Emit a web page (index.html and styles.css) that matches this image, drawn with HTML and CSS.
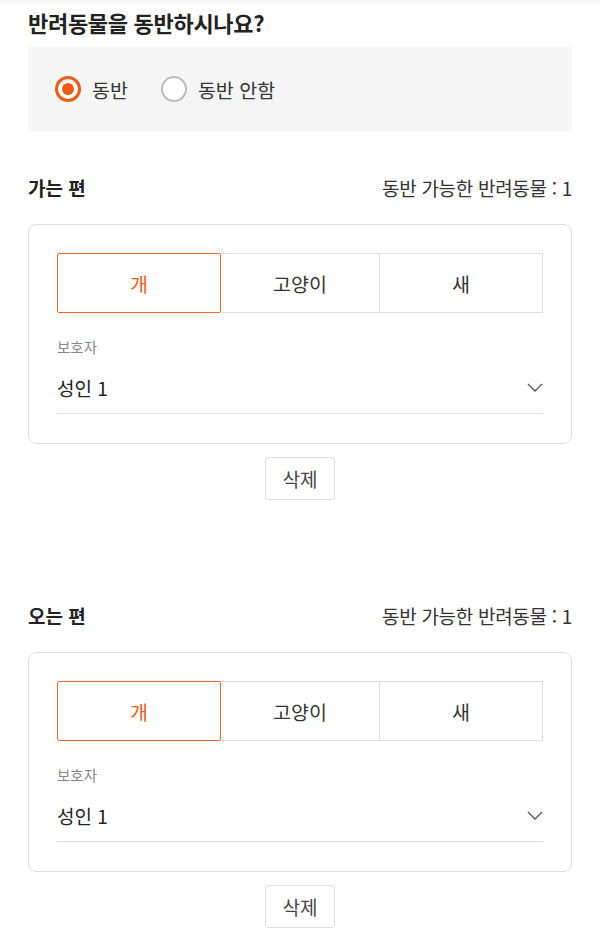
FILE: index.html
```html
<!DOCTYPE html>
<html lang="ko">
<head>
<meta charset="utf-8">
<link rel="stylesheet" href="styles.css">
</head>
<body>
<div class="page">
  <h1 class="q-title">반려동물을 동반하시나요?</h1>
  <div class="radio-box">
    <label class="radio checked"><span class="dot"></span><span>동반</span></label>
    <label class="radio"><span class="dot"></span><span>동반 안함</span></label>
  </div>

  <section class="trip first">
    <div class="trip-head">
      <h2>가는 편</h2>
      <span class="count">동반 가능한 반려동물 : 1</span>
    </div>
    <div class="card">
      <div class="tabs">
        <div class="tab active">개</div>
        <div class="tab">고양이</div>
        <div class="tab">새</div>
      </div>
      <div class="field-label">보호자</div>
      <div class="select">
        <span>성인 1</span>
        <svg class="chev" width="16" height="9" viewBox="0 0 16 9"><path d="M1 1l7 7 7-7" fill="none" stroke="#555" stroke-width="1.3"/></svg>
      </div>
    </div>
    <div class="del-wrap"><button class="del">삭제</button></div>
  </section>

  <section class="trip second">
    <div class="trip-head">
      <h2>오는 편</h2>
      <span class="count">동반 가능한 반려동물 : 1</span>
    </div>
    <div class="card">
      <div class="tabs">
        <div class="tab active">개</div>
        <div class="tab">고양이</div>
        <div class="tab">새</div>
      </div>
      <div class="field-label">보호자</div>
      <div class="select">
        <span>성인 1</span>
        <svg class="chev" width="16" height="9" viewBox="0 0 16 9"><path d="M1 1l7 7 7-7" fill="none" stroke="#555" stroke-width="1.3"/></svg>
      </div>
    </div>
    <div class="del-wrap"><button class="del">삭제</button></div>
  </section>
</div>
</body>
</html>
```
FILE: styles.css
```css
* { box-sizing: border-box; }
html, body { margin: 0; padding: 0; background: #fff; }
body {
  font-family: "Noto Sans CJK KR", "Noto Sans", sans-serif;
  color: #222;
  background: linear-gradient(#f2f2f2, #fff 6px);
}
.page { padding: 0 28px; }
.q-title {
  margin: 0;
  padding-top: 8px;
  font-size: 22px;
  line-height: 28px;
  font-weight: 700;
  color: #222;
  letter-spacing: -0.3px;
}
.radio-box {
  margin-top: 11px;
  height: 84px;
  background: #f5f5f5;
  display: flex;
  align-items: center;
  padding-left: 27px;
}
.radio {
  display: flex;
  align-items: center;
  font-size: 19.5px;
  color: #333;
  margin-right: 33px;
}
.radio .dot {
  width: 26px;
  height: 26px;
  border-radius: 50%;
  border: 2px solid #bbb;
  background: #fff;
  margin-right: 11px;
  position: relative;
}
.radio.checked .dot {
  border: 3px solid #f05a14;
}
.radio.checked .dot::after {
  content: "";
  position: absolute;
  left: 4px; top: 4px;
  width: 12px; height: 12px;
  border-radius: 50%;
  background: #f05a14;
}
.trip.first { margin-top: 42px; }
.trip.second { margin-top: 101px; }
.trip-head {
  display: flex;
  justify-content: space-between;
  align-items: center;
  height: 28px;
}
.trip-head h2 {
  margin: 0;
  font-size: 19px;
  font-weight: 700;
  color: #222;
}
.count {
  font-size: 19px;
  color: #333;
  letter-spacing: -0.3px;
}
.card {
  margin-top: 23px;
  border: 1px solid #dedede;
  border-radius: 8px;
  padding: 28px 28px 29px;
}
.tabs {
  display: grid;
  grid-template-columns: 164px 159px 163px;
  height: 60px;
}
.tab {
  display: flex;
  align-items: center;
  justify-content: center;
  font-size: 19.5px;
  color: #333;
  border: 1px solid #ddd;
  border-left: none;
}
.tab.active {
  border: 1px solid #f06a26;
  color: #f05a14;
  border-radius: 2px;
}
.field-label {
  margin-top: 24px;
  font-size: 14.5px;
  color: #888;
  line-height: 20px;
}
.select {
  margin-top: 18px;
  height: 39px;
  border-bottom: 1px solid #ddd;
  display: flex;
  justify-content: space-between;
  align-items: flex-start;
  font-size: 19px;
  color: #222;
  line-height: 26px;
}
.select .chev { margin-top: 8px; }
.del-wrap {
  display: flex;
  justify-content: center;
  margin-top: 13px;
}
.del {
  width: 70px;
  height: 43px;
  background: #fff;
  border: 1px solid #ddd;
  border-radius: 3px;
  font-family: inherit;
  font-size: 19px;
  color: #444;
}
```
